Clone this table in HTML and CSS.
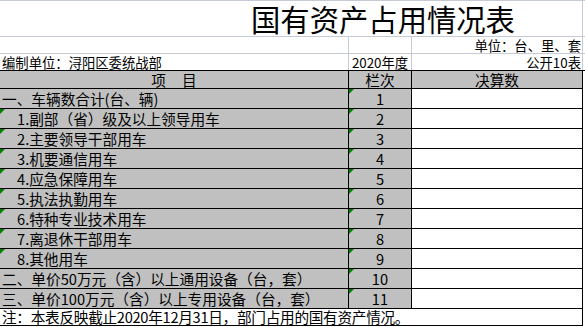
FILE: index.html
```html
<!DOCTYPE html>
<html lang="zh-CN">
<head>
<meta charset="utf-8">
<title>国有资产占用情况表</title>
<link rel="stylesheet" href="styles.css">
</head>
<body>
<div class="sheet">
  <div class="row title-row">
    <div class="title-cell"><span class="title">国有资产占用情况表</span></div>
  </div>
  <div class="row meta">
    <div class="c c1"></div>
    <div class="c c2"></div>
    <div class="c c3 right">单位：台、里、套</div>
  </div>
  <div class="row meta meta-last">
    <div class="c c1 left">编制单位：浔阳区委统战部</div>
    <div class="c c2 center">2020年度</div>
    <div class="c c3 right">公开10表</div>
  </div>
  <div class="row head">
    <div class="c c1 center">项<span class="gap"></span>目</div>
    <div class="c c2 center">栏次</div>
    <div class="c c3 center gray">决算数</div>
  </div>
  <div class="row data">
    <div class="c c1 left">一、车辆数合计(台、辆)</div>
    <div class="c c2 center mark">1</div>
    <div class="c c3"></div>
  </div>
  <div class="row data">
    <div class="c c1 left sub mark">1.副部（省）级及以上领导用车</div>
    <div class="c c2 center mark">2</div>
    <div class="c c3"></div>
  </div>
  <div class="row data">
    <div class="c c1 left sub mark">2.主要领导干部用车</div>
    <div class="c c2 center mark">3</div>
    <div class="c c3"></div>
  </div>
  <div class="row data">
    <div class="c c1 left sub mark">3.机要通信用车</div>
    <div class="c c2 center mark">4</div>
    <div class="c c3"></div>
  </div>
  <div class="row data">
    <div class="c c1 left sub mark">4.应急保障用车</div>
    <div class="c c2 center mark">5</div>
    <div class="c c3"></div>
  </div>
  <div class="row data">
    <div class="c c1 left sub mark">5.执法执勤用车</div>
    <div class="c c2 center mark">6</div>
    <div class="c c3"></div>
  </div>
  <div class="row data">
    <div class="c c1 left sub mark">6.特种专业技术用车</div>
    <div class="c c2 center mark">7</div>
    <div class="c c3"></div>
  </div>
  <div class="row data">
    <div class="c c1 left sub mark">7.离退休干部用车</div>
    <div class="c c2 center mark">8</div>
    <div class="c c3"></div>
  </div>
  <div class="row data">
    <div class="c c1 left sub mark">8.其他用车</div>
    <div class="c c2 center mark">9</div>
    <div class="c c3"></div>
  </div>
  <div class="row data">
    <div class="c c1 left">二、单价50万元（含）以上通用设备（台，套）</div>
    <div class="c c2 center mark">10</div>
    <div class="c c3"></div>
  </div>
  <div class="row data">
    <div class="c c1 left">三、单价100万元（含）以上专用设备（台，套）</div>
    <div class="c c2 center mark">11</div>
    <div class="c c3"></div>
  </div>
  <div class="row note">
    <div class="note-cell">注：本表反映截止2020年12月31日，部门占用的国有资产情况。</div>
  </div>
</div>
</body>
</html>
```
FILE: styles.css
```css
* {
  box-sizing: border-box;
}

html, body {
  margin: 0;
  padding: 0;
  background: #ffffff;
}

body {
  font-family: "Noto Sans CJK SC", "Liberation Sans", sans-serif;
  color: #000000;
}

.sheet {
  width: 585px;
  display: flex;
  flex-direction: column;
}

.row {
  display: flex;
  width: 583px;
}

.c {
  flex: none;
  white-space: nowrap;
  overflow: visible;
  position: relative;
}

.c1 { width: 349px; }
.c2 { width: 63px; }
.c3 { width: 171px; }

.left { text-align: left; }
.center { text-align: center; }
.right { text-align: right; }

/* title */
.title-row {
  width: 585px;
  height: 37px;
  border-top: 1px solid #c6cad6;
  border-bottom: 1px solid #c6cad6;
}

.title-cell {
  width: 583px;
  height: 35px;
  border-right: 1px solid #c6cad6;
  padding-left: 251px;
}

.title {
  font-size: 29.33px;
  line-height: 35px;
  white-space: nowrap;
}

/* meta rows */
.meta {
  width: 585px;
  height: 17px;
  border-bottom: 1px solid #c6cad6;
  font-size: 13.33px;
  line-height: 16px;
}

.meta .c {
  border-right: 1px solid #c6cad6;
  padding-top: 1px;
}

.meta .c1 { padding-left: 2px; }
.meta .c3 { padding-right: 1px; }

.meta-last {
  border-bottom-color: #000000;
}

/* header and data */
.head {
  height: 18px;
  border-bottom: 1px solid #000000;
  font-size: 14.67px;
  line-height: 17px;
}

.data {
  height: 20px;
  border-bottom: 1px solid #000000;
  font-size: 14.67px;
  line-height: 19px;
}

.head .c,
.data .c {
  border-right: 1px solid #000000;
}

.head .c1,
.head .c2,
.data .c1,
.data .c2,
.gray {
  background: #c0c0c0;
}

.data .c3 {
  background: #ffffff;
}

.data .c1 {
  padding-left: 2px;
}

.data .c1.sub {
  padding-left: 17px;
}

.gap {
  display: inline-block;
  width: 16px;
}

/* green error markers */
.mark::before {
  content: "";
  position: absolute;
  left: 0;
  top: 0;
  width: 0;
  height: 0;
  border-top: 5px solid #008000;
  border-right: 5px solid transparent;
}

/* note */
.note {
  height: 17px;
  border-bottom: 1px solid #000000;
}

.note-cell {
  width: 583px;
  border-right: 1px solid #000000;
  font-size: 14.67px;
  line-height: 16px;
  letter-spacing: -0.3px;
  padding-left: 2px;
  white-space: nowrap;
}
```
